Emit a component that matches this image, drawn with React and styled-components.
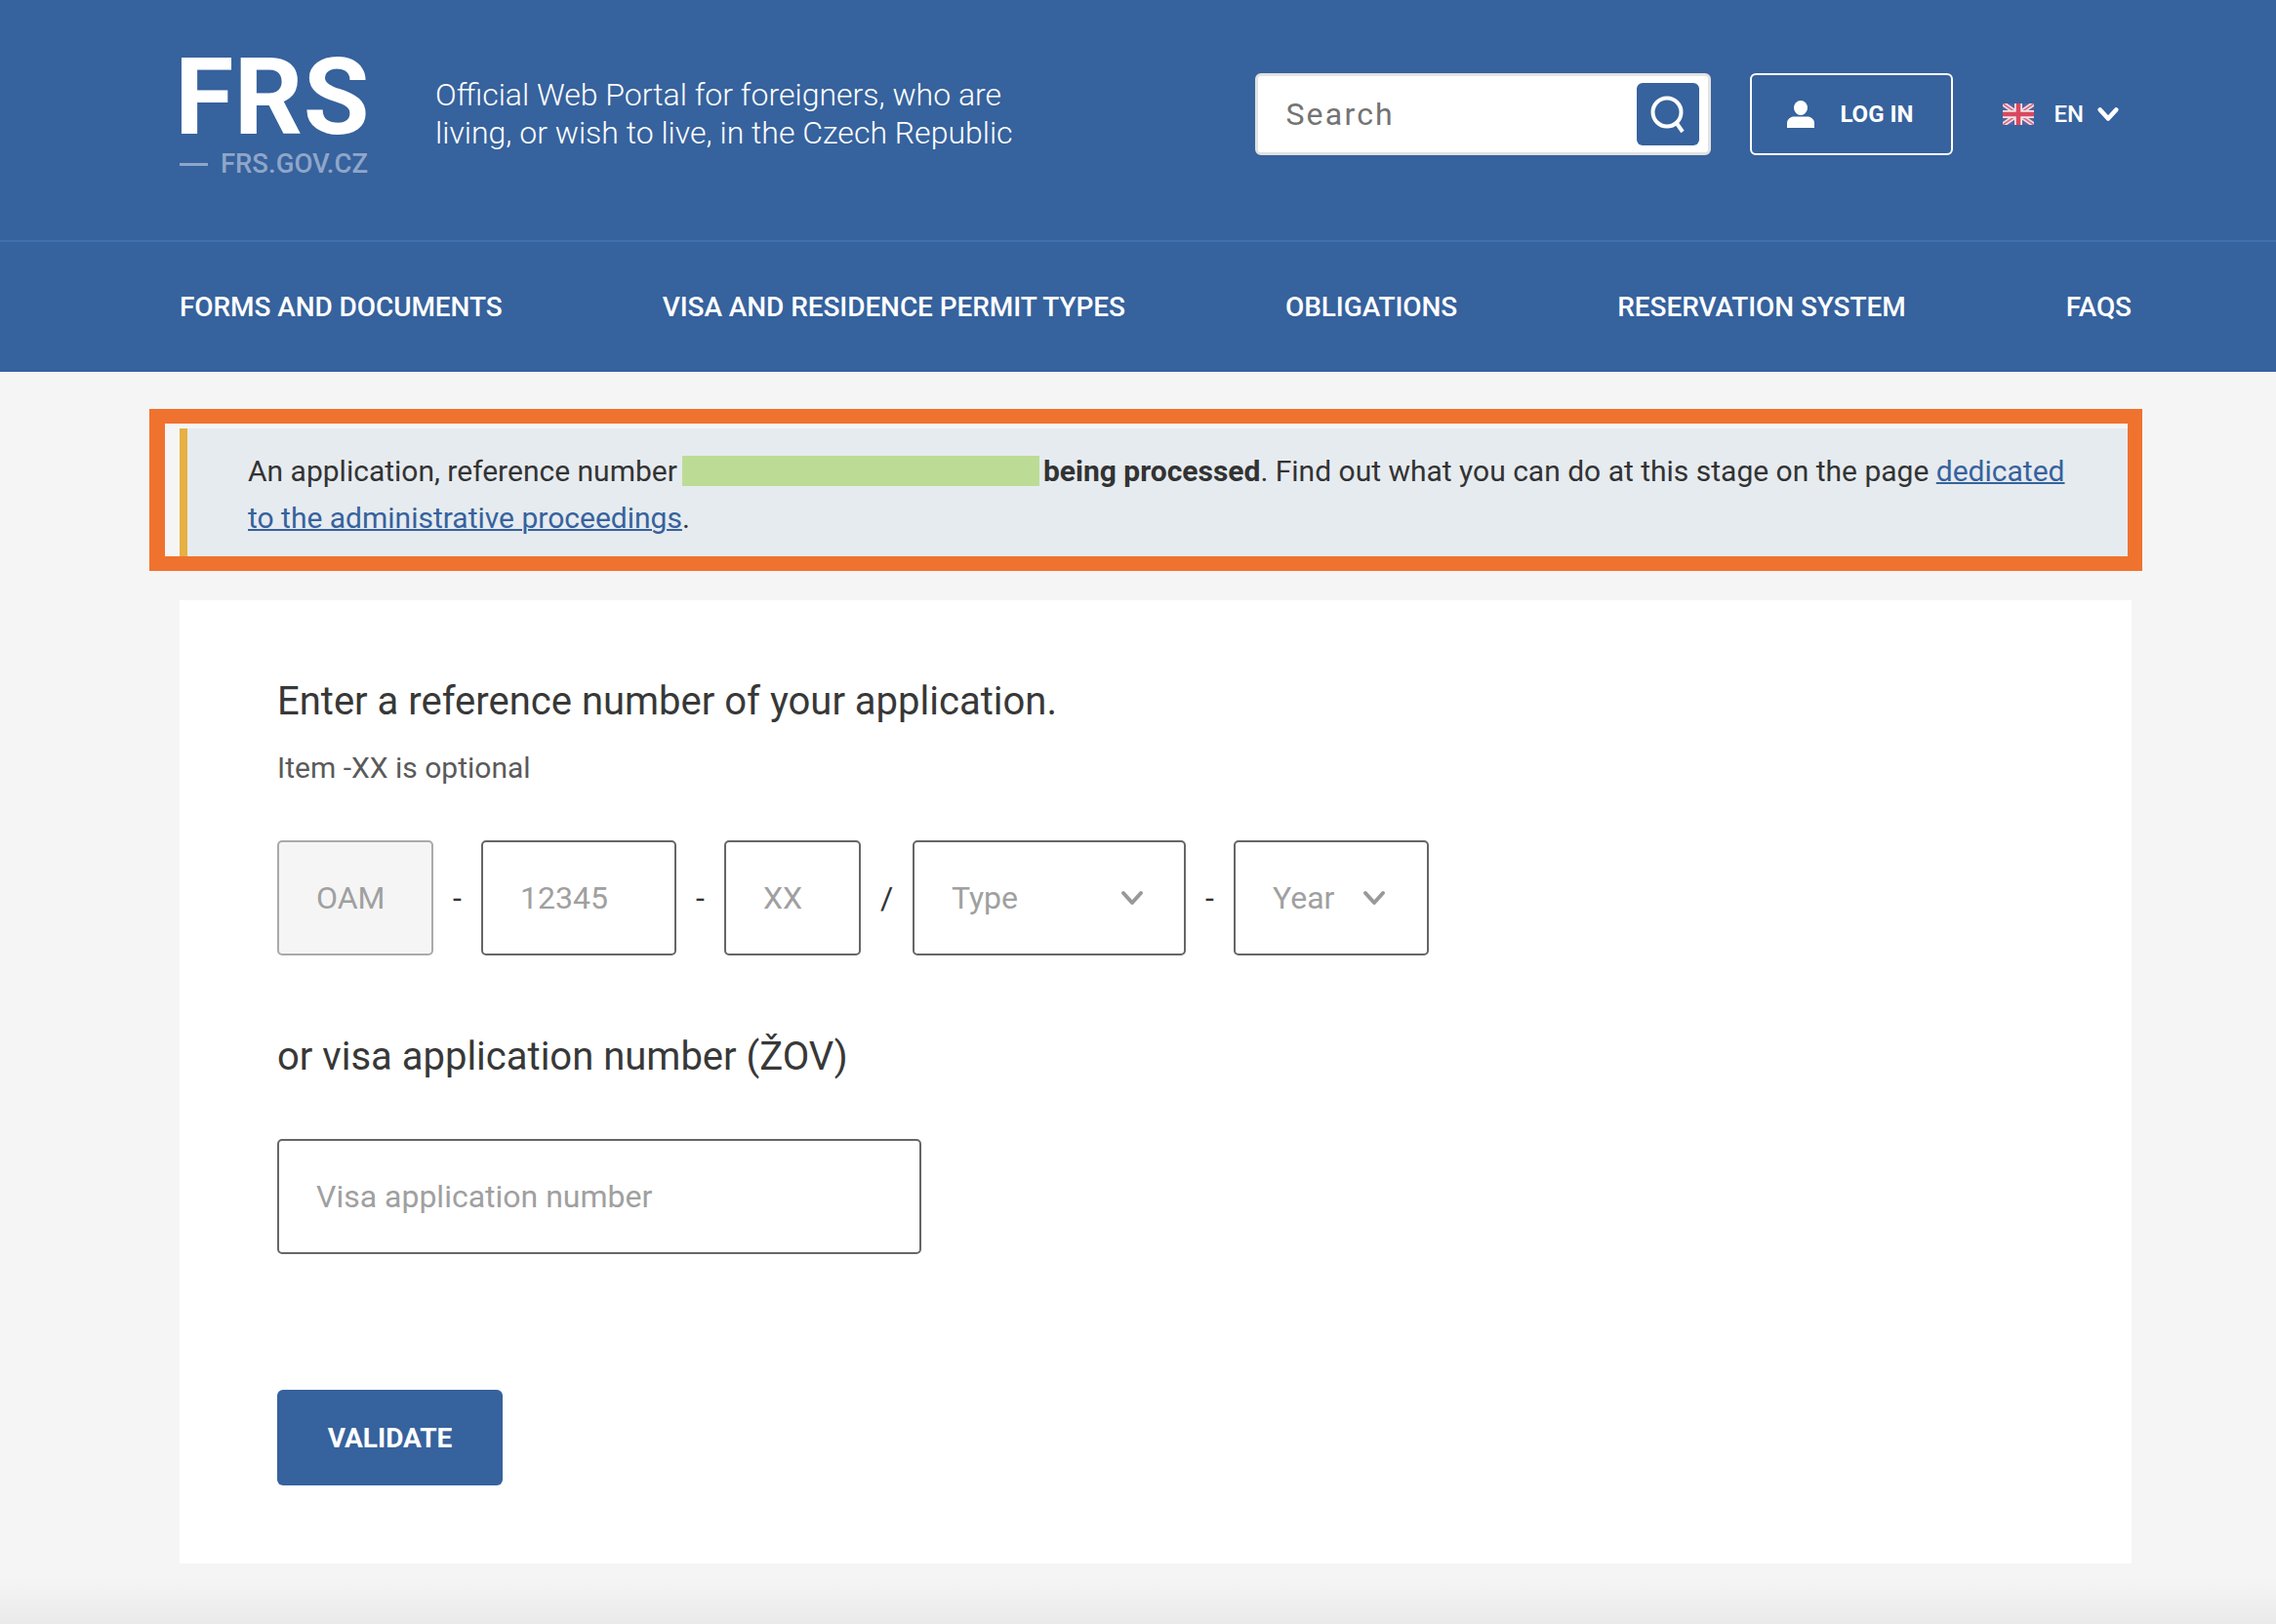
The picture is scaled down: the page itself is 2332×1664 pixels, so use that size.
import React from 'react';
import styled, { createGlobalStyle } from 'styled-components';

const GlobalStyle = createGlobalStyle`
  html, body {
    margin: 0;
    padding: 0;
    background: #f5f5f5;
    font-family: Roboto, "Liberation Sans", sans-serif;
    color: #333;
  }
  * { box-sizing: border-box; }
`;

const Header = styled.header`
  background: #36629d;
  color: #fff;
`;

const TopBar = styled.div`
  height: 248px;
  padding: 60px 161px 0 184px;
  display: flex;
  align-items: flex-start;
  border-bottom: 2px solid #4170ae;
`;

const Logo = styled.div`
  width: 193px;
  display: flex;
  flex-direction: column;
`;

const LogoMark = styled.div`
  font-size: 110px;
  font-weight: 700;
  line-height: 80px;
  letter-spacing: 0.5px;
  margin-left: -5px;
  white-space: nowrap;
`;

const LogoSub = styled.div`
  margin-top: 17px;
  display: flex;
  align-items: center;
  justify-content: space-between;
  font-size: 27.5px;
  line-height: 22px;
  font-weight: 500;
  color: #8fa6c9;
  white-space: nowrap;
  &::before {
    content: '';
    width: 29px;
    height: 3px;
    background: #8fa6c9;
  }
`;

const Tagline = styled.p`
  margin: 18px 0 0 69px;
  width: 620px;
  font-size: 32px;
  line-height: 39px;
  font-weight: 300;
`;

const Tools = styled.div`
  margin-left: auto;
  margin-top: 15px;
  display: flex;
  align-items: center;
`;

const SearchBox = styled.div`
  width: 467px;
  height: 84px;
  background: #fff;
  border: 3px solid #e2e2e2;
  border-radius: 6px;
  display: flex;
  align-items: center;
  justify-content: space-between;
  padding: 0 9px 0 28px;
  color: #737373;
  font-size: 32px;
  letter-spacing: 2.2px;
`;

const SearchButton = styled.div`
  width: 64px;
  height: 64px;
  background: #36629d;
  border-radius: 6px;
  display: flex;
  align-items: center;
  justify-content: center;
`;

const LoginButton = styled.div`
  width: 208px;
  height: 84px;
  margin-left: 40px;
  padding-right: 3px;
  border: 2px solid #fff;
  border-radius: 6px;
  display: flex;
  align-items: center;
  justify-content: center;
  gap: 26px;
  font-size: 24px;
  font-weight: 700;
`;

const Language = styled.div`
  margin-left: 51px;
  display: flex;
  align-items: center;
  font-size: 24px;
  font-weight: 500;
  & > span {
    margin: 0 14px 0 20px;
  }
`;

const Nav = styled.nav`
  height: 133px;
  padding: 0 148px 0 184px;
  display: flex;
  align-items: center;
  justify-content: space-between;
`;

const NavItem = styled.a`
  font-size: 28px;
  font-weight: 500;
  letter-spacing: -0.08px;
  color: #fff;
  white-space: nowrap;
`;

const Main = styled.main`
  padding: 0 148px 0 184px;
`;

const AlertWrap = styled.div`
  position: relative;
  margin-top: 58px;
`;

const Alert = styled.div`
  min-height: 136px;
  background: #e6ebef;
  border-left: 8px solid #e6b042;
  padding: 20px 60px 0 62px;
  font-size: 30px;
  line-height: 48px;
`;

const Redacted = styled.span`
  display: inline-block;
  width: 366px;
  height: 31px;
  margin: 0 4px 0 5px;
  background: #bcdc96;
  vertical-align: -5px;
`;

const AlertLink = styled.a`
  color: #36629d;
  text-decoration: underline;
  text-decoration-thickness: 2px;
`;

const Highlight = styled.div`
  position: absolute;
  top: -20px;
  left: -31px;
  right: -11px;
  bottom: -10px;
  border: 15px solid #f0722f;
  border-left-width: 16px;
  pointer-events: none;
`;

const Card = styled.section`
  margin-top: 40px;
  height: 987px;
  background: #fff;
  padding: 79px 100px 0;
`;

const Heading = styled.h2`
  margin: 0;
  font-size: 40px;
  line-height: 50px;
  font-weight: 400;
  color: #383838;
`;

const Hint = styled.p`
  margin: 23px 0 0;
  font-size: 30px;
  line-height: 40px;
  color: #5a5a5a;
`;

const FieldRow = styled.div`
  margin-top: 54px;
  display: flex;
  align-items: center;
`;

const Field = styled.div`
  width: ${(p) => p.$width}px;
  height: 118px;
  flex: none;
  display: flex;
  align-items: center;
  justify-content: space-between;
  padding: 0 ${(p) => p.$right || 38}px 0 38px;
  background: ${(p) => (p.$disabled ? '#f5f5f5' : '#fff')};
  border: 2px solid ${(p) => (p.$disabled ? '#aaa' : '#666')};
  border-radius: 5px;
  color: #a0a0a0;
  font-size: 32px;
`;

const Separator = styled.span`
  width: ${(p) => p.$width}px;
  flex: none;
  text-align: center;
  font-size: 32px;
  color: #333;
`;

const SubHeading = styled(Heading)`
  margin-top: 79px;
`;

const VisaField = styled(Field)`
  margin-top: 59px;
`;

const ValidateButton = styled.div`
  margin-top: 139px;
  width: 231px;
  height: 98px;
  background: #36629d;
  border-radius: 6px;
  display: flex;
  align-items: center;
  justify-content: center;
  color: #fff;
  font-size: 28px;
  font-weight: 700;
`;

const Footer = styled.div`
  height: 62px;
  background: linear-gradient(#f5f5f5 25%, #eaeaea);
`;

const Chevron = ({ color, size = 24, weight = 4 }) => (
  <svg width={size} height={size} viewBox="0 0 24 24" fill="none">
    <path d="M3 7l9 10 9-10" stroke={color} strokeWidth={weight} strokeLinecap="round" strokeLinejoin="round" />
  </svg>
);

const SearchIcon = () => (
  <svg width="38" height="40" viewBox="0 0 38 40" fill="none">
    <circle cx="18" cy="18" r="14.5" stroke="#fff" strokeWidth="4" />
    <path d="M27 28l7 10" stroke="#fff" strokeWidth="4" />
  </svg>
);

const UserIcon = () => (
  <svg width="28" height="28" viewBox="0 0 28 28" fill="#fff">
    <ellipse cx="14" cy="7.5" rx="7" ry="7.5" />
    <path d="M0 28v-5c0-4 4-6.5 7-6.5h14c3 0 7 2.5 7 6.5v5z" />
  </svg>
);

const FlagIcon = () => (
  <svg width="32" height="22" viewBox="0 0 32 22">
    <rect width="32" height="22" fill="#5a5f9c" />
    <path d="M0 0l32 22M32 0L0 22" stroke="#ecdde6" strokeWidth="5" />
    <path d="M0 0l32 22M32 0L0 22" stroke="#d86a7c" strokeWidth="1.6" />
    <path d="M16 0v22M0 11h32" stroke="#f0e4ea" strokeWidth="8" />
    <path d="M16 0v22M0 11h32" stroke="#d9485f" strokeWidth="4.5" />
  </svg>
);

const navItems = [
  'FORMS AND DOCUMENTS',
  'VISA AND RESIDENCE PERMIT TYPES',
  'OBLIGATIONS',
  'RESERVATION SYSTEM',
  'FAQS',
];

const App = () => (
  <>
    <GlobalStyle />
    <Header>
      <TopBar>
        <Logo>
          <LogoMark>FRS</LogoMark>
          <LogoSub>FRS.GOV.CZ</LogoSub>
        </Logo>
        <Tagline>
          Official Web Portal for foreigners, who are living, or wish to live, in the Czech Republic
        </Tagline>
        <Tools>
          <SearchBox>
            Search
            <SearchButton>
              <SearchIcon />
            </SearchButton>
          </SearchBox>
          <LoginButton>
            <UserIcon />
            LOG IN
          </LoginButton>
          <Language>
            <FlagIcon />
            <span>EN</span>
            <Chevron color="#fff" size={22} weight={5} />
          </Language>
        </Tools>
      </TopBar>
      <Nav>
        {navItems.map((item) => (
          <NavItem key={item}>{item}</NavItem>
        ))}
      </Nav>
    </Header>
    <Main>
      <AlertWrap>
        <Alert>
          An application, reference number<Redacted />
          <strong>being processed</strong>. Find out what you can do at this stage on the page{' '}
          <AlertLink>dedicated to the administrative proceedings</AlertLink>.
        </Alert>
        <Highlight />
      </AlertWrap>
      <Card>
        <Heading>Enter a reference number of your application.</Heading>
        <Hint>Item -XX is optional</Hint>
        <FieldRow>
          <Field $width={160} $disabled>OAM</Field>
          <Separator $width={49}>-</Separator>
          <Field $width={200}>12345</Field>
          <Separator $width={49}>-</Separator>
          <Field $width={140}>XX</Field>
          <Separator $width={53}>/</Separator>
          <Field $width={280} $right={41}>
            Type
            <Chevron color="#999" />
          </Field>
          <Separator $width={49}>-</Separator>
          <Field $width={200} $right={42}>
            Year
            <Chevron color="#999" />
          </Field>
        </FieldRow>
        <SubHeading>or visa application number (ŽOV)</SubHeading>
        <VisaField $width={660}>Visa application number</VisaField>
        <ValidateButton>VALIDATE</ValidateButton>
      </Card>
    </Main>
    <Footer />
  </>
);

export default App;
